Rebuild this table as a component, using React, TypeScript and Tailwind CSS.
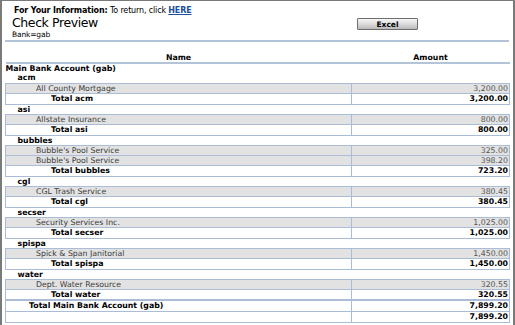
import React from 'react';

type Row =
  | { kind: 'section'; label: string }
  | { kind: 'group'; label: string }
  | { kind: 'detail'; label: string; amount: string }
  | { kind: 'total'; label: string; amount: string }
  | { kind: 'grand'; label: string; amount: string }
  | { kind: 'final'; amount: string };

const rows: Row[] = [
  { kind: 'section', label: 'Main Bank Account (gab)' },
  { kind: 'group', label: 'acm' },
  { kind: 'detail', label: 'All County Mortgage', amount: '3,200.00' },
  { kind: 'total', label: 'Total acm', amount: '3,200.00' },
  { kind: 'group', label: 'asi' },
  { kind: 'detail', label: 'Allstate Insurance', amount: '800.00' },
  { kind: 'total', label: 'Total asi', amount: '800.00' },
  { kind: 'group', label: 'bubbles' },
  { kind: 'detail', label: "Bubble's Pool Service", amount: '325.00' },
  { kind: 'detail', label: "Bubble's Pool Service", amount: '398.20' },
  { kind: 'total', label: 'Total bubbles', amount: '723.20' },
  { kind: 'group', label: 'cgl' },
  { kind: 'detail', label: 'CGL Trash Service', amount: '380.45' },
  { kind: 'total', label: 'Total cgl', amount: '380.45' },
  { kind: 'group', label: 'secser' },
  { kind: 'detail', label: 'Security Services Inc.', amount: '1,025.00' },
  { kind: 'total', label: 'Total secser', amount: '1,025.00' },
  { kind: 'group', label: 'spispa' },
  { kind: 'detail', label: 'Spick & Span Janitorial', amount: '1,450.00' },
  { kind: 'total', label: 'Total spispa', amount: '1,450.00' },
  { kind: 'group', label: 'water' },
  { kind: 'detail', label: 'Dept. Water Resource', amount: '320.55' },
  { kind: 'total', label: 'Total water', amount: '320.55' },
  { kind: 'grand', label: 'Total Main Bank Account (gab)', amount: '7,899.20' },
  { kind: 'final', amount: '7,899.20' },
];

const cell = 'h-[10px] p-0 leading-[9px] whitespace-nowrap';
const tall = 'h-[11px] p-0 leading-[9px] whitespace-nowrap';
const box = 'border border-[#abbdd6]';

const ReportRow = ({ row }: { row: Row }) => {
  switch (row.kind) {
    case 'section':
      return (
        <tr>
          <td colSpan={2} className={`${cell} font-bold text-black`}>{row.label}</td>
        </tr>
      );
    case 'group':
      return (
        <tr>
          <td colSpan={2} className={`${cell} pl-[12px] font-bold text-black`}>{row.label}</td>
        </tr>
      );
    case 'detail':
      return (
        <tr className="bg-[#e2e2e2]">
          <td className={`${cell} ${box} pl-[30px] text-[#3a3a3a]`}>{row.label}</td>
          <td className={`${cell} ${box} pr-[1px] text-right text-[#555]`}>{row.amount}</td>
        </tr>
      );
    case 'total':
      return (
        <tr className="bg-white">
          <td className={`${tall} ${box} pl-[45px] font-bold text-black`}>{row.label}</td>
          <td className={`${tall} ${box} pr-[1px] text-right font-bold text-black`}>{row.amount}</td>
        </tr>
      );
    case 'grand':
      return (
        <tr className="bg-white">
          <td className={`${tall} ${box} border-t-2 pl-[23px] font-bold text-black`}>{row.label}</td>
          <td className={`${tall} ${box} border-t-2 pr-[1px] text-right font-bold text-black`}>{row.amount}</td>
        </tr>
      );
    case 'final':
      return (
        <tr className="bg-white">
          <td className={`${tall} ${box}`}></td>
          <td className={`${tall} ${box} pr-[1px] text-right font-bold text-black`}>{row.amount}</td>
        </tr>
      );
  }
};

export default function App() {
  return (
    <div
      className="w-[515px] h-[325px] overflow-hidden bg-white border-t border-l-2 border-r-2 border-[#7a7a7a] text-[7.8px] text-black"
      style={{ fontFamily: '"DejaVu Sans", Verdana, sans-serif' }}
    >
      <div className="flex pt-[5px]">
        <div className="w-[355px] pl-[10px]">
          <div className="text-[8px] leading-[10px] pl-[2px] tracking-[-0.15px]">
            <span className="font-bold">For Your Information:</span> To return, click{' '}
            <a href="#" className="font-bold text-[#1d4f9b] underline">HERE</a>
          </div>
          <div className="text-[12.5px] leading-[14px] tracking-[-0.4px]">Check Preview</div>
          <div className="text-[7.5px] leading-[9px] tracking-[-0.15px]">Bank=gab</div>
        </div>
        <div className="pt-[12px]">
          <button className="w-[61px] h-[12px] border border-[#6f6f6f] rounded-[1px] bg-gradient-to-b from-[#f7f7f7] via-[#dcdcdc] to-[#b9b9b9] text-[7.5px] font-bold leading-[9px] text-black">
            Excel
          </button>
        </div>
      </div>
      <div className="ml-[3px] mr-[4px] mt-[1px] border-t-2 border-[#b3c3d8]" />
      <table className="ml-[3px] w-[504px] table-fixed border-collapse">
        <colgroup>
          <col className="w-[346px]" />
          <col className="w-[158px]" />
        </colgroup>
        <thead>
          <tr>
            <th className="h-[21px] p-0 align-bottom text-center font-bold border-b-2 border-[#b3c3d8] leading-[8px]">Name</th>
            <th className="h-[21px] p-0 align-bottom text-center font-bold border-b-2 border-[#b3c3d8] leading-[8px]">Amount</th>
          </tr>
        </thead>
        <tbody>
          {rows.map((row, i) => (
            <ReportRow key={i} row={row} />
          ))}
        </tbody>
      </table>
    </div>
  );
}
